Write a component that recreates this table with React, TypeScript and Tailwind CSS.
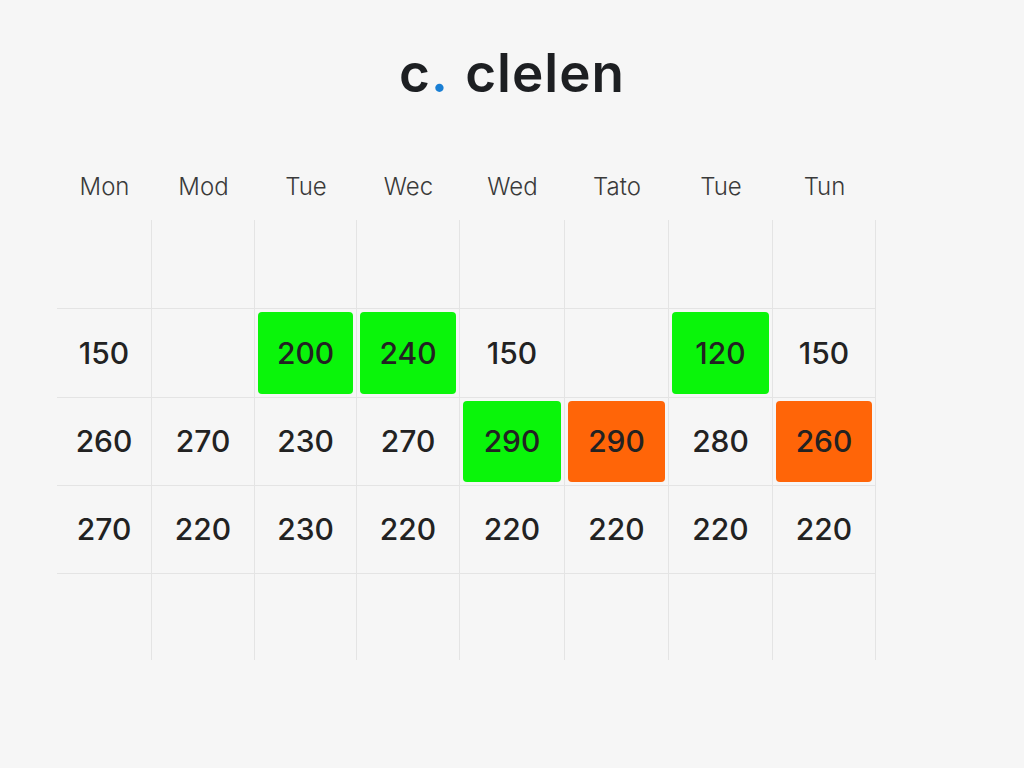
import React from 'react';

const days = ['Mon', 'Mod', 'Tue', 'Wec', 'Wed', 'Tato', 'Tue', 'Tun'];

type Cell = { v?: number; tone?: 'green' | 'orange' };

const rows: Cell[][] = [
  [{}, {}, {}, {}, {}, {}, {}, {}],
  [{ v: 150 }, {}, { v: 200, tone: 'green' }, { v: 240, tone: 'green' }, { v: 150 }, {}, { v: 120, tone: 'green' }, { v: 150 }],
  [{ v: 260 }, { v: 270 }, { v: 230 }, { v: 270 }, { v: 290, tone: 'green' }, { v: 290, tone: 'orange' }, { v: 280 }, { v: 260, tone: 'orange' }],
  [{ v: 270 }, { v: 220 }, { v: 230 }, { v: 220 }, { v: 220 }, { v: 220 }, { v: 220 }, { v: 220 }],
  [{}, {}, {}, {}, {}, {}, {}, {}],
];

const rowHeights = ['h-[89px]', 'h-[89px]', 'h-[88px]', 'h-[88px]', 'h-[86px]'];

export default function App() {
  return (
    <div className="min-h-screen w-full bg-[#f6f6f6] text-[#222] [font-family:Inter,sans-serif]">
      {/* Title */}
      <div className="flex justify-center pt-[37px]">
        <h1 className="text-[53px] leading-[72px] font-semibold tracking-[1px] text-[#1d1f22]">
          c<span className="text-[#1a7fd4] mr-[2px]">.</span> clelen
        </h1>
      </div>

      <div className="ml-[57px] mt-[60px] w-[819px]">
        {/* Day header */}
        <div className="grid grid-cols-[95px_103px_102px_103px_105px_104px_104px_103px] h-[34px] mb-[17px] items-center">
          {days.map((d, i) => (
            <div key={i} className="text-center text-[24px] font-light text-[#3a3a3a]">
              {d}
            </div>
          ))}
        </div>

        {/* Table */}
        {rows.map((row, r) => (
          <div
            key={r}
            className={`grid grid-cols-[95px_103px_102px_103px_105px_104px_104px_103px] ${rowHeights[r]} ${r < 4 ? 'border-b border-[#e4e4e4]' : ''}`}
          >
            {row.map((c, i) => (
              <div key={i} className="border-r border-[#e4e4e4] p-[3px] flex">
                {c.v !== undefined && (
                  <div
                    className={`flex-1 flex items-center justify-center rounded-[4px] text-[30px] font-medium ${
                      c.tone === 'green' ? 'bg-[#0af50a]' : c.tone === 'orange' ? 'bg-[#ff6508]' : ''
                    }`}
                  >
                    {c.v}
                  </div>
                )}
              </div>
            ))}
          </div>
        ))}
      </div>
    </div>
  );
}
